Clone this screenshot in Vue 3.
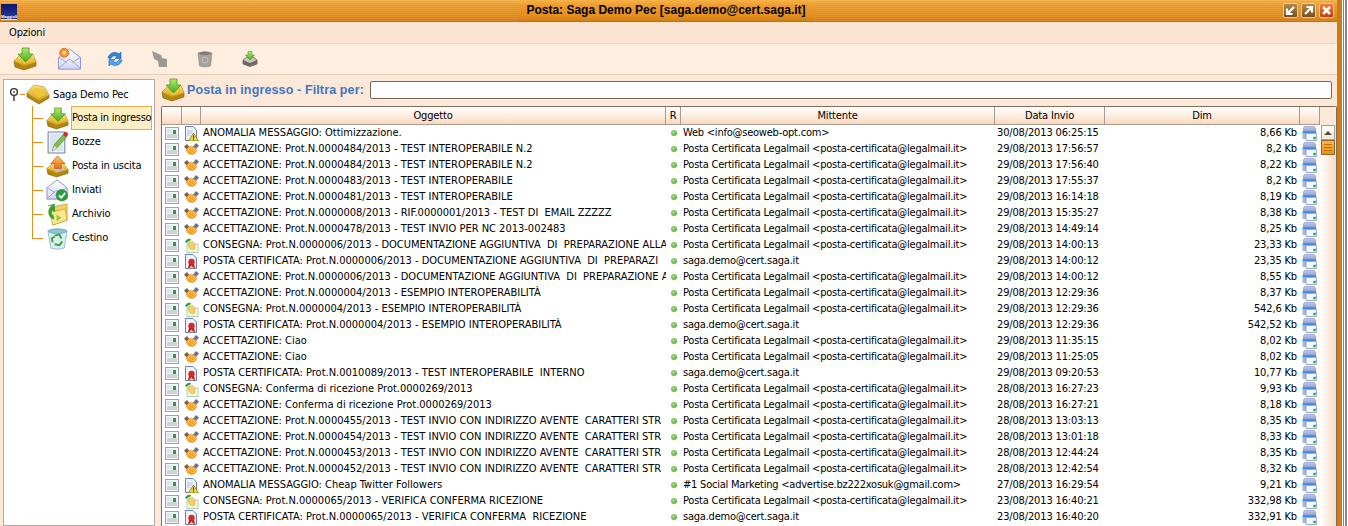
<script setup>
const H = 'ACCETTAZIONE: ', P = 'POSTA CERTIFICATA: ', C = 'CONSEGNA: '
const L = 'Posta Certificata Legalmail <posta-certificata@legalmail.it>'
const S = 'saga.demo@cert.saga.it'
const DOC = 'Prot.N.0000006/2013 - DOCUMENTAZIONE AGGIUNTIVA  DI  PREPARAZI'
const STR = ' - TEST INVIO CON INDIRIZZO AVENTE  CARATTERI STR'
const rows = [
  ['warn', 'ANOMALIA MESSAGGIO: Ottimizzazione.', 'Web <info@seoweb-opt.com>', '30/08/2013 06:25:15', '8,66 Kb'],
  ['hand', H + 'Prot.N.0000484/2013 - TEST INTEROPERABILE N.2', L, '29/08/2013 17:56:57', '8,2 Kb'],
  ['hand', H + 'Prot.N.0000484/2013 - TEST INTEROPERABILE N.2', L, '29/08/2013 17:56:40', '8,22 Kb'],
  ['hand', H + 'Prot.N.0000483/2013 - TEST INTEROPERABILE', L, '29/08/2013 17:55:37', '8,2 Kb'],
  ['hand', H + 'Prot.N.0000481/2013 - TEST INTEROPERABILE', L, '29/08/2013 16:14:18', '8,19 Kb'],
  ['hand', H + 'Prot.N.0000008/2013 - RIF.0000001/2013 - TEST DI  EMAIL ZZZZZ', L, '29/08/2013 15:35:27', '8,38 Kb'],
  ['hand', H + 'Prot.N.0000478/2013 - TEST INVIO PER NC 2013-002483', L, '29/08/2013 14:49:14', '8,25 Kb'],
  ['cons', C + 'Prot.N.0000006/2013 - DOCUMENTAZIONE AGGIUNTIVA  DI  PREPARAZIONE ALLA', L, '29/08/2013 14:00:13', '23,33 Kb'],
  ['seal', P + DOC, S, '29/08/2013 14:00:12', '23,35 Kb'],
  ['hand', H + 'Prot.N.0000006/2013 - DOCUMENTAZIONE AGGIUNTIVA  DI  PREPARAZIONE A', L, '29/08/2013 14:00:12', '8,55 Kb'],
  ['hand', H + 'Prot.N.0000004/2013 - ESEMPIO INTEROPERABILITÀ', L, '29/08/2013 12:29:36', '8,37 Kb'],
  ['cons', C + 'Prot.N.0000004/2013 - ESEMPIO INTEROPERABILITÀ', L, '29/08/2013 12:29:36', '542,6 Kb'],
  ['seal', P + 'Prot.N.0000004/2013 - ESEMPIO INTEROPERABILITÀ', S, '29/08/2013 12:29:36', '542,52 Kb'],
  ['hand', H + 'Ciao', L, '29/08/2013 11:35:15', '8,02 Kb'],
  ['hand', H + 'Ciao', L, '29/08/2013 11:25:05', '8,02 Kb'],
  ['seal', P + 'Prot.N.0010089/2013 - TEST INTEROPERABILE  INTERNO', S, '29/08/2013 09:20:53', '10,77 Kb'],
  ['cons', C + 'Conferma di ricezione Prot.0000269/2013', L, '28/08/2013 16:27:23', '9,93 Kb'],
  ['hand', H + 'Conferma di ricezione Prot.0000269/2013', L, '28/08/2013 16:27:21', '8,18 Kb'],
  ['hand', H + 'Prot.N.0000455/2013' + STR, L, '28/08/2013 13:03:13', '8,35 Kb'],
  ['hand', H + 'Prot.N.0000454/2013' + STR, L, '28/08/2013 13:01:18', '8,33 Kb'],
  ['hand', H + 'Prot.N.0000453/2013' + STR, L, '28/08/2013 12:44:24', '8,35 Kb'],
  ['hand', H + 'Prot.N.0000452/2013' + STR, L, '28/08/2013 12:42:54', '8,32 Kb'],
  ['warn', 'ANOMALIA MESSAGGIO: Cheap Twitter Followers', '#1 Social Marketing <advertise.bz222xosuk@gmail.com>', '27/08/2013 16:29:54', '9,21 Kb'],
  ['cons', C + 'Prot.N.0000065/2013 - VERIFICA CONFERMA RICEZIONE', L, '23/08/2013 16:40:21', '332,98 Kb'],
  ['seal', P + 'Prot.N.0000065/2013 - VERIFICA CONFERMA  RICEZIONE', S, '23/08/2013 16:40:20', '332,91 Kb'],
]
const tree = [
  { icon: 'inbox', label: 'Posta in ingresso', sel: true },
  { icon: 'draft', label: 'Bozze' },
  { icon: 'outbox', label: 'Posta in uscita' },
  { icon: 'sent', label: 'Inviati' },
  { icon: 'archive', label: 'Archivio' },
  { icon: 'bin', label: 'Cestino', last: true },
]
const tools = [
  { icon: 'inbox', w: 24 },
  { icon: 'mail', w: 25 },
  { icon: 'sync', w: 18 },
  { icon: 'grayarrow', w: 18 },
  { icon: 'graybin', w: 18 },
  { icon: 'disk', w: 16 },
]
</script>

<template>
  <svg class="defs" aria-hidden="true">
    <defs>
      <linearGradient id="gold" x1="0" y1="0" x2="0" y2="1"><stop offset="0" stop-color="#fbe26e"/><stop offset="1" stop-color="#cf9c18"/></linearGradient>
      <linearGradient id="green" x1="0" y1="0" x2="0" y2="1"><stop offset="0" stop-color="#b4ea5e"/><stop offset="1" stop-color="#42ad26"/></linearGradient>
      <linearGradient id="orng" x1="0" y1="0" x2="0" y2="1"><stop offset="0" stop-color="#ffc070"/><stop offset="1" stop-color="#e56f10"/></linearGradient>
      <linearGradient id="mailbg" x1="0" y1="0" x2="0" y2="1"><stop offset="0" stop-color="#ffffff"/><stop offset="1" stop-color="#d3d6f2"/></linearGradient>
      <linearGradient id="srv" x1="0" y1="0" x2="0" y2="1"><stop offset="0" stop-color="#c3c9ea"/><stop offset="1" stop-color="#8f97c8"/></linearGradient>
      <symbol id="tray" viewBox="0 0 24 24">
        <path d="M1 11 L8 3 L18 5 L23 13 L23 16 L13 22 L1 15 Z" fill="#b38610" stroke="#7d5b0a" stroke-width=".6"/>
        <path d="M1 11 L8 3 L18 5 L23 13 L13 19 Z" fill="url(#gold)"/>
        <path d="M6 10 L9 6 L16.5 7.5 L19 12.5 L13 16 Z" fill="#edc63c"/>
      </symbol>
      <symbol id="inbox" viewBox="0 0 24 24">
        <path d="M1 14 L7 8 L20 8 L23 15 L23 19 L11 23 L2 20 Z" fill="#b38610" stroke="#7d5b0a" stroke-width=".6"/>
        <path d="M1 14 L7 8 L20 8 L23 15 L11 19 Z" fill="url(#gold)"/>
        <path d="M6 12 L9 9.5 L18 9.5 L20 14 L11 17 Z" fill="#edc63c"/>
        <path d="M9 1 H16 V7 H20 L12.5 15 L5 7 H9 Z" fill="url(#green)" stroke="#3c8a20" stroke-width=".7"/>
      </symbol>
      <symbol id="mail" viewBox="0 0 26 26">
        <path d="M1.5 11 L13 2 L24.5 11 L24.5 23 L1.5 23 Z" fill="url(#mailbg)" stroke="#8d90c8"/>
        <path d="M1.5 22.5 L12 13 H14 L24.5 22.5 M2 11 L10 16 M24 11 L16 16" fill="none" stroke="#9ea0d4"/>
        <circle cx="7.5" cy="6" r="4.6" fill="#f79a24" stroke="#e2603a"/>
        <circle cx="7.5" cy="6" r="2" fill="#ffe27a"/>
      </symbol>
      <symbol id="sync" viewBox="0 0 18 18">
        <path d="M2 8 C3 3 9 1 13 4 L15 2 V8.5 H9 L11 6.5 C8.5 5 6 6 5 8.5 Z" fill="#2f86dc" stroke="#1a5da8" stroke-width=".6"/>
        <path d="M16 10 C15 15 9 17 5 14 L3 16 V9.5 H9 L7 11.5 C9.5 13 12 12 13 9.5 Z" fill="#52a4ec" stroke="#1a5da8" stroke-width=".6"/>
      </symbol>
      <symbol id="grayarrow" viewBox="0 0 18 18">
        <path d="M1 1 L10 5 L11 8 L16 9 L16 17 L8 17 L7 11 L3 9 Z" fill="#9a9a94"/>
      </symbol>
      <symbol id="graybin" viewBox="0 0 18 18">
        <path d="M2 3 Q9 0 16 3 L14.5 16 Q9 18 3.5 16 Z" fill="#a4a29c" stroke="#8c8a84" stroke-width=".6"/>
        <ellipse cx="9" cy="3.4" rx="6" ry="1.6" fill="#7e7c78"/>
        <circle cx="9" cy="10" r="3" fill="none" stroke="#c2c0ba"/>
      </symbol>
      <symbol id="disk" viewBox="0 0 16 16">
        <path d="M1 9 L5 6 H11 L15 9 V13 L8 15.5 L1 13 Z" fill="#c8c6c2" stroke="#55524e" stroke-width=".7"/>
        <path d="M1 9 L8 12 L15 9 V13 L8 15.5 L1 13 Z" fill="#6c6a66"/>
        <path d="M6 0.5 H10 V4 H12.5 L8 9 L3.5 4 H6 Z" fill="url(#green)" stroke="#3c8a20" stroke-width=".5"/>
      </symbol>
      <symbol id="draft" viewBox="0 0 22 22">
        <path d="M2 1 H18 V21 H2 Z" fill="#eef0fa" stroke="#6f86a8"/>
        <path d="M4 3 H16 V19 H4 Z" fill="#d7e2f2"/>
        <path d="M6 19 L8 13 L17 3 L20 5.5 L10 16.5 Z" fill="#7fc04a" stroke="#3c8a20" stroke-width=".6"/>
        <path d="M6 19 L8 14 L10.5 16.5 Z" fill="#f5d7a8"/>
        <circle cx="18.8" cy="3.2" r="2.2" fill="#d8262a"/>
      </symbol>
      <symbol id="outbox" viewBox="0 0 24 24">
        <path d="M1 14 L7 9 L18 9 L23 15 L23 19 L11 23 L2 20 Z" fill="#b38610" stroke="#7d5b0a" stroke-width=".6"/>
        <path d="M1 14 L7 9 L18 9 L23 15 L11 19 Z" fill="url(#gold)"/>
        <path d="M7 14 L11 12 H18 L19 15 L11 18 Z" fill="#c2c2cc"/>
        <path d="M12 1 L20 9 H16 V14 H9 V9 H5 Z" fill="url(#orng)" stroke="#c5560f" stroke-width=".7"/>
      </symbol>
      <symbol id="sent" viewBox="0 0 24 24">
        <path d="M1 9 L11.5 1 L22 9 V21 H1 Z" fill="url(#mailbg)" stroke="#8d90c8"/>
        <path d="M1 20.5 L10 12.5 H13 L20 19 M1.5 9 L9 14 M21.5 9 L14 14" fill="none" stroke="#9ea0d4"/>
        <circle cx="16.5" cy="17" r="6" fill="#2c9e3a" stroke="#1d7a2a" stroke-width=".6"/>
        <path d="M13.5 17 L16 19.5 L20 14.5" fill="none" stroke="#fff" stroke-width="1.8"/>
      </symbol>
      <symbol id="archive" viewBox="0 0 24 24">
        <path d="M5 5 L9 5 L11 3 L22 1 L22 18 L7 23 Z" fill="#f4d25e" stroke="#b89324" stroke-width=".7"/>
        <path d="M4 10 L20 6 L22 18 L7 23 Z" fill="#fbe690" stroke="#c09a2a" stroke-width=".7"/>
        <path d="M11 12 L16 15.5 L11 19 Z" fill="#8bc84a"/>
        <path d="M8 2 A8 8 0 0 0 8 17 L8 13.5 A5 5 0 0 1 6 7 L9 9 V1 L2 3 Z" fill="#2fa52f" stroke="#1e7c22" stroke-width=".4"/>
      </symbol>
      <symbol id="bin" viewBox="0 0 24 24">
        <path d="M2 4 Q12 0 22 4 L19 22 Q12 24.5 5 22 Z" fill="#dbeef2" stroke="#86b0c2" stroke-width=".8"/>
        <ellipse cx="12" cy="4.4" rx="9.5" ry="2.4" fill="#8cc4d8" stroke="#5d95ad" stroke-width=".6"/>
        <path d="M9 9 L14 8 L16 12 M17 15 L14 19 L9 18 M7 16 L6 12 L9 10" fill="none" stroke="#3da33d" stroke-width="2"/>
      </symbol>
      <symbol id="cell" viewBox="0 0 14 13">
        <rect x=".5" y=".5" width="13" height="12" fill="#f2f3fa" stroke="#9a9ec8"/>
        <rect x="2" y="2" width="5" height="4" fill="#e2e2ec"/>
        <rect x="2" y="7" width="10" height="4" fill="#cfcfd8"/>
        <rect x="8" y="3" width="3" height="4" fill="#2aa22a"/>
      </symbol>
      <symbol id="hand" viewBox="0 0 15 13">
        <path d="M0 3.5 L3 1 L6 4.5 L3 7 Z" fill="#74644c"/>
        <path d="M15 2.5 L12 0 L9 3.5 L12 6 Z" fill="#66719c"/>
        <ellipse cx="7.5" cy="7.4" rx="5" ry="4" fill="#f9b03a" stroke="#e08a1e" stroke-width=".6"/>
        <path d="M5.5 6.5 L9 8.5 M4.8 8.5 L7.5 10.5" stroke="#e08a1e" stroke-width=".8"/>
      </symbol>
      <symbol id="cons" viewBox="0 0 15 15">
        <path d="M3 6 H14 V14.5 H3 Z" fill="#f2faf0" stroke="#8ac6a0" stroke-width=".8"/>
        <path d="M4 5 L8 3 L11 6 L11 11 L8 12 L5 10 Z" fill="#f7cf63" stroke="#d9a22a" stroke-width=".5"/>
        <path d="M1 4 Q3 0 7 1 L6 3 Q3.5 3 3 5 Z" fill="#2f9a4a"/>
      </symbol>
      <symbol id="warn" viewBox="0 0 15 15">
        <path d="M1.5 .5 H9 L12.5 4 V14.5 H1.5 Z" fill="#eef1fa" stroke="#6f7fae"/>
        <path d="M3 5 H9 M3 7 H8 M3 9 H6" stroke="#b8c0dc"/>
        <path d="M9.5 7 L14.5 15 H4.5 Z" fill="#f6d92a" stroke="#59501a" stroke-width=".6"/>
        <path d="M9.5 9.5 V12.5 M9.5 13.2 V14.2" stroke="#222" stroke-width="1"/>
      </symbol>
      <symbol id="seal" viewBox="0 0 15 15">
        <path d="M1.5 .5 H9 L12.5 4 V14.5 H1.5 Z" fill="#eef1fa" stroke="#6f7fae"/>
        <circle cx="7.5" cy="8" r="3.2" fill="#e2231f"/>
        <path d="M5 10 L3.8 14.5 L6.5 13 L7.5 11 L8.5 13 L11.2 14.5 L10 10 Z" fill="#d01c18"/>
      </symbol>
      <symbol id="print" viewBox="0 0 15 15">
        <path d="M2.5 .5 H12 L13.5 2 V6 H1.5 V2 Z" fill="url(#srv)" stroke="#6d78b8" stroke-width=".5"/>
        <path d="M.5 5.5 H14 V7 H.5 Z" fill="#2f8ae6"/>
        <path d="M.5 7 H4 V13 H.5 Z" fill="#a9b2dc"/>
        <path d="M4 7.5 H14.5 V14.5 H4 Z" fill="#f4f7ff" stroke="#7688cc" stroke-width=".7"/>
        <rect x="11.3" y="10.8" width="2.4" height="2.4" fill="#22a822"/>
      </symbol>
    </defs>
  </svg>

  <div class="page">
    <div class="win">
      <header class="title">
        <div class="logo"><span>Maggioli</span></div>
        <div class="title-mid"><span class="title-text">Posta: Saga Demo Pec [saga.demo@cert.saga.it]</span></div>
        <div class="wbtns">
          <span class="wbtn">
            <svg viewBox="0 0 13 13"><path d="M10 3 L4 9 M3 4.5 V10 H8.5" fill="none" stroke="#fff" stroke-width="2.2"/></svg>
          </span>
          <span class="wbtn">
            <svg viewBox="0 0 13 13"><path d="M3 10 L9 4 M4.5 3 H10 V8.5" fill="none" stroke="#fff" stroke-width="2.2"/></svg>
          </span>
          <span class="wbtn close">
            <svg viewBox="0 0 13 13"><path d="M3 3 L10 10 M10 3 L3 10" fill="none" stroke="#fff" stroke-width="2.6"/></svg>
          </span>
        </div>
      </header>
      <nav class="menu"><span>Opzioni</span></nav>
      <div class="tools">
        <span v-for="t in tools" :key="t.icon" class="tool">
          <svg :width="t.w" :height="t.w"><use :href="'#' + t.icon"/></svg>
        </span>
      </div>
      <main class="body">
        <aside class="tree">
          <div class="root">
            <svg class="pin" width="12" height="14" viewBox="0 0 12 14">
              <circle cx="6" cy="5" r="3.4" fill="#fff" stroke="#333" stroke-width="1.4"/>
              <circle cx="6" cy="5" r="1" fill="#555"/>
              <path d="M6 8.5 V14" stroke="#333" stroke-width="1.4"/>
            </svg>
            <i class="dash"></i>
            <svg width="24" height="24"><use href="#tray"/></svg>
            <span class="root-label">Saga Demo Pec</span>
          </div>
          <div v-for="n in tree" :key="n.label" class="node">
            <i class="conn" :class="{ end: n.last }"></i>
            <svg class="node-ico" width="23" height="23"><use :href="'#' + n.icon"/></svg>
            <span class="node-label" :class="{ sel: n.sel }">{{ n.label }}</span>
          </div>
        </aside>
        <section class="pane">
          <div class="filter">
            <svg width="24" height="24"><use href="#inbox"/></svg>
            <span class="filter-label">Posta in ingresso - Filtra per:</span>
            <span class="filter-input"></span>
          </div>
          <div class="grid">
            <div class="list">
              <div class="head">
                <span></span><span></span><span>Oggetto</span><span>R</span><span>Mittente</span><span>Data Invio</span><span>Dim</span><span></span>
              </div>
              <div v-for="(r, i) in rows" :key="i" class="row">
                <span class="ic first"><svg width="14" height="13"><use href="#cell"/></svg></span>
                <span class="ic"><svg width="15" height="15"><use :href="'#' + r[0]"/></svg></span>
                <span class="txt subj">{{ r[1] }}</span>
                <span class="ic"><i class="dot"></i></span>
                <span class="txt from">{{ r[2] }}</span>
                <span class="txt">{{ r[3] }}</span>
                <span class="txt num">{{ r[4] }}</span>
                <span class="ic last"><svg width="15" height="15"><use href="#print"/></svg></span>
              </div>
            </div>
            <div class="scroll">
              <div class="sb-corner"></div>
              <div class="sb-up"><i></i></div>
              <div class="sb-thumb"><i></i><i></i><i></i></div>
            </div>
          </div>
        </section>
      </main>
    </div>
    <div class="edge"></div>
  </div>
</template>

<style>
html, body { margin: 0; background: #fff; overflow: hidden; }
</style>

<style scoped>
.defs { position: absolute; width: 0; height: 0; }
.page { display: flex; width: 1348px; height: 526px; overflow: hidden; }
.edge { flex: 1; background: linear-gradient(90deg, #fff 0 1px, #8a8580 1px 2px, #fff 2px 3px, #c08038 3px 4px, #8a8580 4px 5px, #fff 5px); }
.win {
  width: 1342px; height: 526px; flex: none; overflow: hidden; box-sizing: border-box;
  border-right: 5px solid #cc7d16;
  background: #fce8d8; color: #000;
  font: 11px "DejaVu Sans Condensed", "DejaVu Sans", sans-serif;
  letter-spacing: -.15px;
  display: flex; flex-direction: column;
}
.title {
  height: 22px; margin-right: -5px; flex: none; display: flex; align-items: center; padding: 0 8px 0 1px; box-sizing: border-box;
  border-bottom: 1px solid #b8741a;
  letter-spacing: 0;
  background:
    repeating-linear-gradient(180deg, rgba(255,255,255,.07) 0 1px, rgba(150,80,0,.07) 1px 2px),
    linear-gradient(180deg, #f7b249 0, #ec9a2b 30%, #e3901f 75%, #d28013 100%);
}
.logo {
  width: 16px; height: 16px; flex: none; background: linear-gradient(180deg, #0c1670, #2a3a9a); display: flex; align-items: flex-end; justify-content: center; overflow: hidden; margin-top: 2px;
  border-bottom: 1px solid #dde;
  box-sizing: border-box;
}
.logo span { color: #fff; font: 700 4px/5px "Liberation Sans", sans-serif; }
.title-mid { flex: 1; display: flex; justify-content: center; padding-left: 32px; align-self: stretch; }
.title-text {
  font: 700 12px/21px "Liberation Sans", sans-serif; padding: 0 8px;
  background: linear-gradient(180deg, #f7b249 0, #ec9a2b 30%, #e3901f 75%, #d28013 100%);
}
.wbtns { display: flex; gap: 3px; }
.wbtn {
  width: 15px; height: 15px; box-sizing: border-box; display: block; border: 1px solid #f2c68a; border-radius: 2px;
  background: linear-gradient(180deg, #b58a50, #74501f);
}
.wbtn svg { display: block; width: 13px; height: 13px; }
.wbtn.close { background: linear-gradient(180deg, #f07f3c, #c03c12); }
.menu { height: 22px; flex: none; display: flex; align-items: center; padding-left: 9px; border-bottom: 1px solid #ecd3bd; background: #fbe5d2; box-sizing: border-box; }
.tools {
  height: 31px; flex: none; display: grid; grid-template-columns: repeat(6, 45px); padding-left: 2px; align-items: center;
  border-bottom: 1px solid #e9cfb8; box-sizing: border-box; background: #fdeee0;
}
.tool { display: flex; justify-content: center; }
.tool svg { display: block; }
.body { flex: 1; min-height: 0; display: flex; padding: 4px 0 0 3px; gap: 6px; }
.tree { width: 152px; flex: none; box-sizing: border-box; background: #fff; border: 1px solid #b5aca0; padding-top: 2px; }
.root { height: 24px; display: flex; align-items: center; padding-left: 4px; }
.pin { flex: none; }
.dash { width: 5px; height: 1px; background: #e8901c; margin-right: 1px; flex: none; }
.root-label { margin-left: 3px; }
.node { height: 24px; display: flex; align-items: center; padding-left: 28px; }
.conn {
  width: 11px; height: 24px; flex: none;
  background: linear-gradient(#e8901c, #e8901c) 0 0 / 1px 100% no-repeat, linear-gradient(#e8901c, #e8901c) 0 12px / 100% 1px no-repeat;
}
.conn.end { background-size: 1px 13px, 100% 1px; }
.node-ico { margin-left: 3px; flex: none; }
.node-label { margin-left: 1px; height: 24px; line-height: 24px; padding-left: 2px; }
.node-label.sel { box-sizing: border-box; width: 81px; padding-left: 0; line-height: 22px; background: #fdeec4; border: 1px solid #dcae50; white-space: nowrap; margin-left: 2px; letter-spacing: -.25px; }
.pane { flex: 1; min-width: 0; display: flex; flex-direction: column; }
.filter { height: 27px; flex: none; box-sizing: border-box; padding-bottom: 5px; display: flex; align-items: center; gap: 2px; }
.filter-label { font: 700 12.5px "Liberation Sans", sans-serif; color: #3f76c4; white-space: nowrap; letter-spacing: .13px; }
.filter-input { flex: 1; height: 18px; margin: 0 5px 0 4px; box-sizing: border-box; background: #fff; border: 1px solid #7a6650; border-radius: 2px; }
.grid { flex: 1; min-height: 0; display: flex; box-sizing: border-box; border: 1px solid #7d6e5c; border-bottom: 0; border-radius: 2px 2px 0 0; background: #fff; overflow: hidden; }
.list { width: 1158px; flex: none; }
.head, .row { display: grid; grid-template-columns: 20px 19px 465px 15px 314px 110px 195px 20px; }
.head { height: 18px; line-height: 17px; text-align: center; box-sizing: border-box; background: linear-gradient(180deg, #fff 0, #fde6d4 70%, #f9d8bf 100%); border-bottom: 1px solid #a89c90; }
.head span { border-right: 1px solid #a39a90; box-sizing: border-box; white-space: nowrap; overflow: hidden; }
.row { height: 16px; line-height: 15px; }
.ic { display: flex; align-items: center; justify-content: center; }
.ic svg { display: block; }
.ic.first { padding-right: 1px; }
.ic.last { padding-right: 2px; }
.txt { white-space: pre; overflow: hidden; padding-left: 2px; }
.subj { letter-spacing: 0; }
.from { letter-spacing: -.22px; }
.num { text-align: right; padding: 0 3px 0 0; }
.dot { width: 6px; height: 6px; border-radius: 50%; background: radial-gradient(circle at 40% 35%, #a4e07a, #3f9d2c); }
.scroll { flex: 1; background: linear-gradient(90deg, #fff, #f8dcc6); display: flex; flex-direction: column; align-items: center; }
.sb-corner { height: 18px; flex: none; align-self: stretch; background: #fce8d8; }
.sb-up { width: 14px; height: 15px; box-sizing: border-box; background: linear-gradient(180deg, #fff, #f3e6da); border: 1px solid #a89c90; display: flex; align-items: center; justify-content: center; }
.sb-up i { width: 0; height: 0; border: 4px solid transparent; border-top: 0; border-bottom: 4px solid #5f4a34; }
.sb-thumb { width: 14px; height: 15px; box-sizing: border-box; background: linear-gradient(180deg, #fbb445, #ef8f16); border: 1px solid #8d6a3a; display: flex; flex-direction: column; gap: 2px; align-items: center; justify-content: center; }
.sb-thumb i { width: 8px; height: 1px; background: #b96f10; }
</style>
